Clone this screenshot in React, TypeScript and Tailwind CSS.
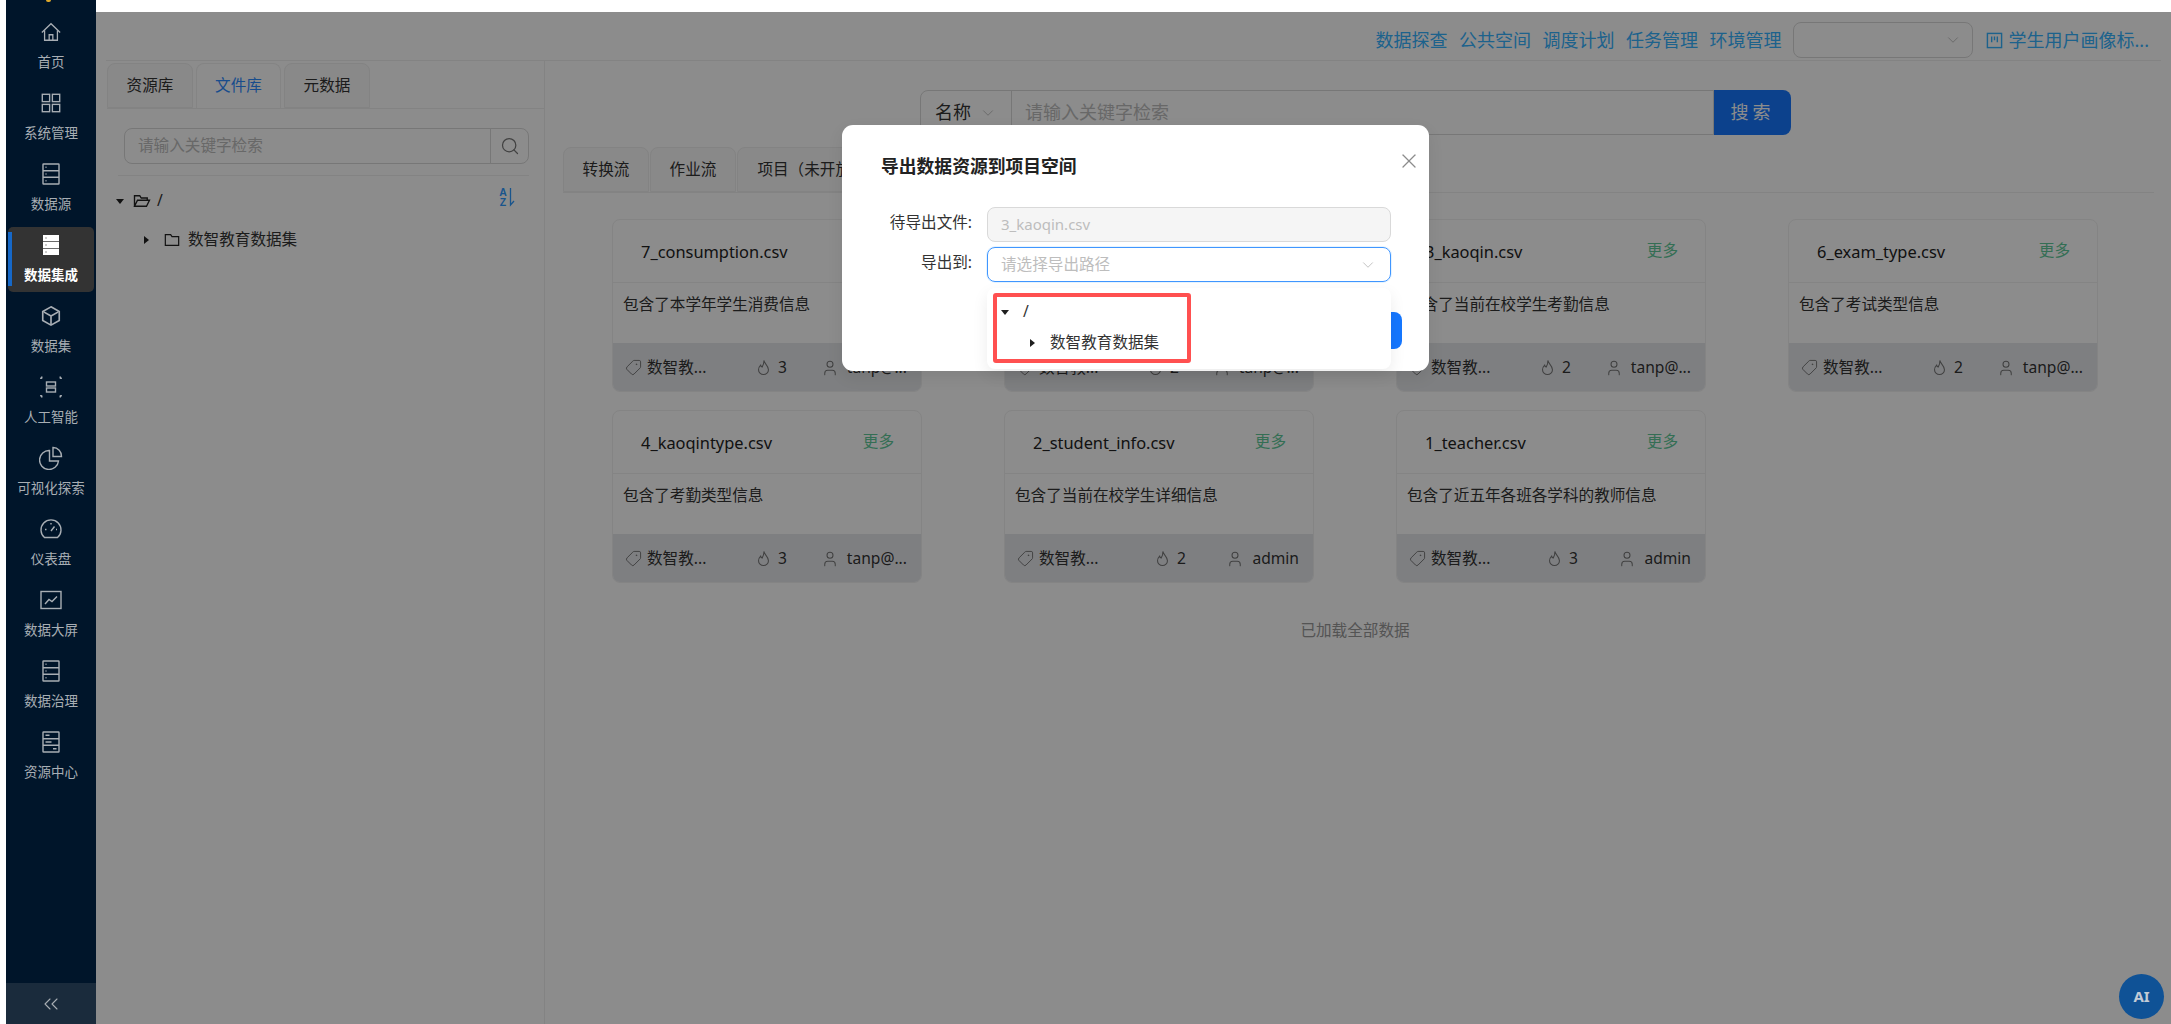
import { ChevronDown, Search, User, Tag, X, ChevronsLeft } from "lucide-react";

const font = { fontFamily: '"Noto Sans", "Noto Sans CJK SC", sans-serif' };

// sidebar icons
function HomeIcon() {
  return (
    <svg viewBox="0 0 24 24" className="w-[22px] h-[22px]" fill="none" stroke="currentColor" strokeWidth="1.4">
      <path d="M2 12.5 12 3l10 9.500" />
      <path d="M5 10v11h14V10" />
      <path d="M10 21v-6h4v6" />
    </svg>
  );
}
function GridIcon() {
  return (
    <svg viewBox="0 0 24 24" className="w-[22px] h-[22px]" fill="none" stroke="currentColor" strokeWidth="1.500">
      <rect x="2.500" y="2.500" width="8" height="8" />
      <rect x="13.500" y="2.500" width="8" height="8" />
      <rect x="2.500" y="13.500" width="8" height="8" />
      <rect x="13.500" y="13.500" width="8" height="8" />
    </svg>
  );
}
function ServerIcon({ variant }: { variant?: "dots" | "lines" }) {
  return (
    <svg viewBox="0 0 24 24" className="w-[24px] h-[24px]" fill="none" stroke="currentColor" strokeWidth="1.400">
      <rect x="4" y="2" width="16" height="20" rx="0.500" />
      <path d="M4 8.700h16M4 15.300h16" />
      {variant === "lines" ? (
        <path d="M6.500 5.300h4M6.500 12h6M14 18.700h3.500" />
      ) : (
        <path d="M6.500 5.300h1M6.500 12h1M6.500 18.700h1" />
      )}
    </svg>
  );
}
function ServerFilledIcon() {
  return (
    <svg viewBox="0 0 24 24" className="w-[24px] h-[24px]">
      <rect x="4" y="2" width="16" height="6.200" fill="#fff" />
      <rect x="4" y="8.900" width="16" height="6.200" fill="#fff" />
      <rect x="4" y="15.800" width="16" height="6.200" fill="#fff" />
      <path d="M6.500 5h1M6.500 12h1M6.500 19h1" stroke="#333" strokeWidth="1.200" />
    </svg>
  );
}
function CubeIcon() {
  return (
    <svg viewBox="0 0 24 24" className="w-[22px] h-[22px]" fill="none" stroke="currentColor" strokeWidth="1.800">
      <path d="M12 2 21 7v10l-9 5-9-5V7z" />
      <path d="M4 7.500 12 12l8-4.500M12 12v9" />
    </svg>
  );
}
function ScanIcon() {
  return (
    <svg viewBox="0 0 24 24" className="w-[24px] h-[24px]" fill="none" stroke="currentColor" strokeWidth="1.400">
      <rect x="7.500" y="7" width="9" height="4" />
      <rect x="7.500" y="13" width="9" height="4" />
      <path d="M2 2.500h1.500M2 2.500v1.500M22 2.500h-1.500M22 2.500v1.500M2 21.500h1.500M2 21.500V20M22 21.500h-1.500M22 21.500V20" strokeWidth="1.800" />
    </svg>
  );
}
function PieIcon() {
  return (
    <svg viewBox="0 0 24 24" className="w-[24px] h-[24px]" fill="none" stroke="currentColor" strokeWidth="1.400">
      <path d="M10.500 4.500a9.500 9.500 0 1 0 9 10.500h-9z" />
      <path d="M14 1.500a8.500 8.500 0 0 1 8.500 9H14z" />
    </svg>
  );
}
function GaugeIcon() {
  return (
    <svg viewBox="0 0 24 24" className="w-[24px] h-[24px]" fill="none" stroke="currentColor" strokeWidth="1.400">
      <path d="M5.500 20.500a10 10 0 1 1 13 0z" />
      <path d="M12 14l3.500-4.500M6 12.500h1.500M12 6v1.500M18 12.500h-1" />
    </svg>
  );
}
function ChartIcon() {
  return (
    <svg viewBox="0 0 24 24" className="w-[24px] h-[24px]" fill="none" stroke="currentColor" strokeWidth="1.400">
      <rect x="2" y="3.500" width="20" height="17" />
      <path d="M6 16l4-4.500 3 2 5-5" />
    </svg>
  );
}

function Caret({ dir }: { dir: "down" | "right" }) {
  return (
    <svg viewBox="0 0 10 10" className="w-[10px] h-[10px] shrink-0" fill="#1f1f1f">
      {dir === "down" ? <path d="M1 3h8L5 8z" /> : <path d="M3 1l5 4-5 4z" />}
    </svg>
  );
}
function FlameIcon() {
  return (
    <svg viewBox="0 0 24 24" className="w-[17px] h-[17px] shrink-0" fill="none" stroke="currentColor" strokeWidth="1.500">
      <path d="M12.500 2c.5 4.500 6.500 7.500 6.500 13a7 7 0 0 1-14 0c0-3 1.500-5 3-6.500.3 1.500 1 2.500 2 3 1.500-2.500 3-5 2.500-9.500z" />
    </svg>
  );
}
function ProjectIcon() {
  return (
    <svg viewBox="0 0 24 24" className="w-[17px] h-[17px] shrink-0" fill="none" stroke="currentColor" strokeWidth="2">
      <rect x="2" y="2" width="20" height="20" />
      <path d="M8 6.500v8M12 6.500v5M16 6.500v8" />
    </svg>
  );
}
function SortIcon() {
  return (
    <svg viewBox="0 0 18 20" className="w-[18px] h-[20px] -mt-[8px] text-[#2f9bff]" fill="none">
      <text x="5" y="9" textAnchor="middle" fontSize="10.500" fontWeight="700" fontFamily="Liberation Sans, sans-serif" fill="currentColor">A</text>
      <text x="5" y="18.500" textAnchor="middle" fontSize="10.500" fontWeight="700" fontFamily="Liberation Sans, sans-serif" fill="currentColor">Z</text>
      <path d="M12.500 1v17l3.500-4" stroke="currentColor" strokeWidth="1.300" />
    </svg>
  );
}

const navItems = [
  { label: "首页", icon: <HomeIcon /> },
  { label: "系统管理", icon: <GridIcon /> },
  { label: "数据源", icon: <ServerIcon /> },
  { label: "数据集成", icon: <ServerFilledIcon />, active: true },
  { label: "数据集", icon: <CubeIcon /> },
  { label: "人工智能", icon: <ScanIcon /> },
  { label: "可视化探索", icon: <PieIcon /> },
  { label: "仪表盘", icon: <GaugeIcon /> },
  { label: "数据大屏", icon: <ChartIcon /> },
  { label: "数据治理", icon: <ServerIcon /> },
  { label: "资源中心", icon: <ServerIcon variant="lines" /> },
];

// second card is covered by the modal, only its footer shows
const cards = [
  { name: "7_consumption.csv", desc: "包含了本学年学生消费信息", hot: 3, user: "tanp@..." },
  { name: "", desc: "", hot: 2, user: "tanp@..." },
  { name: "3_kaoqin.csv", desc: "包含了当前在校学生考勤信息", hot: 2, user: "tanp@..." },
  { name: "6_exam_type.csv", desc: "包含了考试类型信息", hot: 2, user: "tanp@..." },
  { name: "4_kaoqintype.csv", desc: "包含了考勤类型信息", hot: 3, user: "tanp@..." },
  { name: "2_student_info.csv", desc: "包含了当前在校学生详细信息", hot: 2, user: "admin" },
  { name: "1_teacher.csv", desc: "包含了近五年各班各学科的教师信息", hot: 3, user: "admin" },
];

function Sidebar() {
  return (
    <aside className="relative w-[90px] shrink-0 h-full bg-[#00152a] flex flex-col pt-[11px]">
      <div className="absolute left-[40px] top-0 w-[5px] h-[2px] bg-[#e0a92a] rounded-b" />
      {navItems.map((item) => (
        <div key={item.label} className="h-[71px] shrink-0 px-[2px] py-[3px]">
          <div
            className={
              item.active
                ? "relative h-full rounded-[5px] bg-[#333333] text-white flex flex-col items-center"
                : "relative h-full text-[#a8aeb4] flex flex-col items-center"
            }
          >
            {item.active && <div className="absolute left-0 top-[5px] bottom-[6px] w-[4px] bg-[#1668c8]" />}
            <div className="h-[36px] flex items-center justify-center">{item.icon}</div>
            <div className={item.active ? "mt-[2px] text-[13.5px] leading-[20px] font-bold" : "mt-[2px] text-[13.5px] leading-[20px]"}>
              {item.label}
            </div>
          </div>
        </div>
      ))}
      <div className="mt-auto h-[41px] bg-[#1a2b3c] flex items-center justify-center text-[#a8aeb4]">
        <ChevronsLeft className="w-[24px] h-[24px]" strokeWidth={1.1} />
      </div>
    </aside>
  );
}

function TabButton({ label, active, wide }: { label: string; active?: boolean; wide?: boolean }) {
  return (
    <div
      className={
        active
          ? "h-[45px] w-[85px] flex items-center justify-center rounded-t-[8px] border border-b-0 border-[#f0f0f0] bg-white text-[#2f8cff] text-[15.6px] -mb-px"
          : wide
            ? "h-[45px] w-[150px] flex items-center justify-center rounded-t-[8px] border border-[#eeeeee] bg-[#fafafa] text-[#333] text-[15.6px]"
            : "h-[45px] w-[86px] flex items-center justify-center rounded-t-[8px] border border-[#eeeeee] bg-[#fafafa] text-[#333] text-[15.6px]"
      }
    >
      {label}
    </div>
  );
}

function FileCard({ card }: { card: (typeof cards)[number] }) {
  return (
    <div className="h-[173px] rounded-[8px] border border-[#f0f0f0] bg-white overflow-hidden flex flex-col">
      <div className="h-[63px] shrink-0 flex items-center justify-between pl-[28px] pr-[27px] pt-[2px] border-b border-[#f0f0f0]">
        <span className="text-[#222] text-[16.4px]">{card.name}</span>
        <span className="text-[#5fc99a] text-[15.6px] -mt-[3px]">更多</span>
      </div>
      <div className="h-[60px] shrink-0 px-[10px] pt-[9px] text-[#333] text-[15.6px] leading-[24px]">{card.desc}</div>
      <div className="flex-1 bg-[#e6e8ec] flex items-center justify-between pl-[12px] pr-[14px] pt-[2px] text-[#333] text-[15.6px]">
        <div className="flex items-center gap-[5px] pr-[15px]">
          <Tag className="w-[17px] h-[17px] -scale-x-100 text-[#777]" strokeWidth={1.4} />
          <span>数智教...</span>
        </div>
        <div className="flex items-center gap-[6px]">
          <span className="text-[#777]"><FlameIcon /></span>
          <span>{card.hot}</span>
        </div>
        <div className="flex items-center gap-[8px]">
          <User className="w-[18px] h-[18px] text-[#777]" strokeWidth={1.4} />
          <span>{card.user}</span>
        </div>
      </div>
    </div>
  );
}

function ExportModal() {
  return (
    <div className="absolute left-[746px] top-[113px] w-[587px] h-[246px] rounded-[11px] bg-white shadow-[0_6px_16px_rgba(0,0,0,0.08)] pt-[28px] pl-[39px] pr-[38px]">
      <X className="absolute right-[8px] top-[24px] w-[24px] h-[24px] text-[#8c8c8c]" strokeWidth={1.3} />
      <div className="text-[17.8px] leading-[26px] font-bold text-[#222]">导出数据资源到项目空间</div>
      <div className="mt-[28px] flex flex-col gap-[5px]">
        <div className="flex items-center">
          <div className="w-[91px] -mt-[4px] text-right text-[15.6px] text-[#333]">待导出文件:</div>
          <div className="ml-[15px] w-[404px] h-[35px] rounded-[8px] border border-[#d9d9d9] bg-[#f5f5f5] px-[13px] flex items-center text-[15px] text-[#bdbdbd]">
            3_kaoqin.csv
          </div>
        </div>
        <div className="flex items-center">
          <div className="w-[91px] -mt-[3px] text-right text-[15.6px] text-[#333]">导出到:</div>
          <div className="ml-[15px] w-[404px] h-[35px] rounded-[8px] border border-[#4096ff] shadow-[0_0_0_1px_rgba(5,145,255,0.1)] px-[13px] flex items-center justify-between text-[15.6px] text-[#bdbdbd]">
            <span>请选择导出路径</span>
            <ChevronDown className="w-[18px] h-[18px] text-[#bdbdbd]" strokeWidth={1.2} />
          </div>
        </div>
      </div>
      {/* footer button sits behind the open dropdown */}
      <div className="absolute right-[27px] top-[187px] w-[80px] h-[37px] rounded-[8px] bg-[#1677ff]" />
      <div className="absolute left-[145px] top-[163px] w-[404px] h-[81px] rounded-[8px] bg-white shadow-[0_6px_16px_rgba(0,0,0,0.08)] p-[5px_6px]">
        <div className="w-[198px] h-[70px] border-[4px] border-[#ff5050] rounded-[3px] pl-[3px]">
          <div className="h-[30px] flex items-center">
            <Caret dir="down" />
            <span className="ml-[13px] text-[15.6px] text-[#333]">/</span>
          </div>
          <div className="h-[32px] flex items-center pl-[27px]">
            <Caret dir="right" />
            <span className="ml-[13px] text-[15.6px] text-[#333]">数智教育数据集</span>
          </div>
        </div>
      </div>
    </div>
  );
}

export default function App() {
  return (
    <div className="w-full h-screen overflow-hidden bg-white flex pl-[6px]" style={font}>
      <Sidebar />
      <div className="flex-1 min-w-0 h-full flex flex-col">
        <div className="h-[12px] shrink-0 bg-white" />
        <main className="relative flex-1 min-h-0 bg-white flex flex-col">
          {/* top links */}
          <header className="h-[49px] shrink-0 mx-[10px] pt-[7px] border-b border-[#eeeeee] flex items-center justify-end gap-[11.500px] pr-[12px] text-[#35b2ff] text-[18px]">
            <span className="mt-[2px]">数据探查</span>
            <span className="mt-[2px]">公共空间</span>
            <span className="mt-[2px]">调度计划</span>
            <span className="mt-[2px]">任务管理</span>
            <span className="mt-[2px]">环境管理</span>
            <div className="w-[180px] h-[36px] rounded-[8px] border border-[#d9d9d9] flex items-center justify-end pr-[10px]">
              <ChevronDown className="w-[18px] h-[18px] text-[#bdbdbd]" strokeWidth={1.2} />
            </div>
            <div className="flex items-center gap-[6px] ml-[1px] mt-[2px]">
              <ProjectIcon />
              <span>学生用户画像标...</span>
            </div>
          </header>

          <div className="flex-1 min-h-0 flex">
            {/* file tree */}
            <section className="w-[449px] shrink-0 border-r border-[#eeeeee] pl-[11px] pt-[2px]">
              <div className="flex gap-[3px] border-b border-[#eeeeee]">
                <TabButton label="资源库" />
                <TabButton label="文件库" active />
                <TabButton label="元数据" />
              </div>
              <div className="pl-[17px] pt-[19px]">
                <div className="w-[405px] h-[36px] flex">
                  <div className="flex-1 rounded-l-[8px] border border-[#d9d9d9] px-[13px] flex items-center text-[15.6px] text-[#bdbdbd]">
                    请输入关键字检索
                  </div>
                  <div className="w-[39px] -ml-px rounded-r-[8px] border border-[#d9d9d9] flex items-center justify-center text-[#777]">
                    <Search className="w-[20px] h-[20px]" strokeWidth={1.5} />
                  </div>
                </div>
              </div>
              <div className="ml-[11px] mr-[15px] mt-[11px] border-b border-[#eeeeee]" />
              <div className="pl-[8px] pr-[28px] pt-[8px] text-[#333] text-[15.6px]">
                <div className="h-[34px] flex items-center justify-between">
                  <div className="flex items-center">
                    <Caret dir="down" />
                    <svg viewBox="0 0 24 24" className="ml-[8px] w-[18px] h-[18px]" fill="none" stroke="#222" strokeWidth="1.800">
                      <path d="M2 19V5h7l2 3h8v3M2 19l4-8h16l-4 8z" />
                    </svg>
                    <span className="ml-[6px]">/</span>
                  </div>
                  <SortIcon />
                </div>
                <div className="h-[44px] flex items-center pl-[26px]">
                  <Caret dir="right" />
                  <svg viewBox="0 0 24 24" className="ml-[13px] w-[16px] h-[16px]" fill="none" stroke="#222" strokeWidth="1.800">
                    <path d="M2 20V4h8l2 3h10v13z" />
                  </svg>
                  <span className="ml-[8px]">数智教育数据集</span>
                </div>
              </div>
            </section>

            {/* search + cards */}
            <section className="flex-1 min-w-0 pt-[29px]">
              <div className="ml-[375px] w-[871px] h-[45px] flex text-[#333]">
                <div className="w-[92px] shrink-0 rounded-l-[8px] border border-[#d9d9d9] flex items-center justify-between px-[14px] text-[18px]">
                  <span>名称</span>
                  <ChevronDown className="w-[18px] h-[18px] text-[#bdbdbd]" strokeWidth={1.2} />
                </div>
                <div className="flex-1 -ml-px border border-[#d9d9d9] flex items-center px-[13px] text-[18px] text-[#bdbdbd]">
                  请输入关键字检索
                </div>
                <div className="w-[77px] shrink-0 rounded-r-[8px] bg-[#1677ff] text-white text-[18px] tracking-[4px] flex items-center justify-center">
                  搜索
                </div>
              </div>
              <div className="mt-[12px] ml-[18px] mr-[17px] flex gap-[1px] border-b border-[#eeeeee]">
                <TabButton label="转换流" />
                <TabButton label="作业流" />
                <TabButton label="项目（未开放）" wide />
              </div>
              <div className="mt-[26px] ml-[67px] grid grid-cols-[repeat(4,310px)] gap-x-[82px] gap-y-[18px]">
                {cards.map((c, i) => (
                  <FileCard key={i} card={c} />
                ))}
              </div>
              <div className="mt-[36px] ml-[67px] w-[1486px] text-center text-[15.6px] leading-[22px] text-[#999]">已加载全部数据</div>
            </section>
          </div>

          {/* modal mask */}
          <div className="absolute inset-0 bg-black/45" />
          <ExportModal />
          <div className="absolute right-[7px] bottom-[5px] w-[45px] h-[45px] rounded-full bg-[#0f5296] flex items-center justify-center text-[#c2cbd6] text-[15px] font-bold">
            AI
          </div>
        </main>
      </div>
    </div>
  );
}
